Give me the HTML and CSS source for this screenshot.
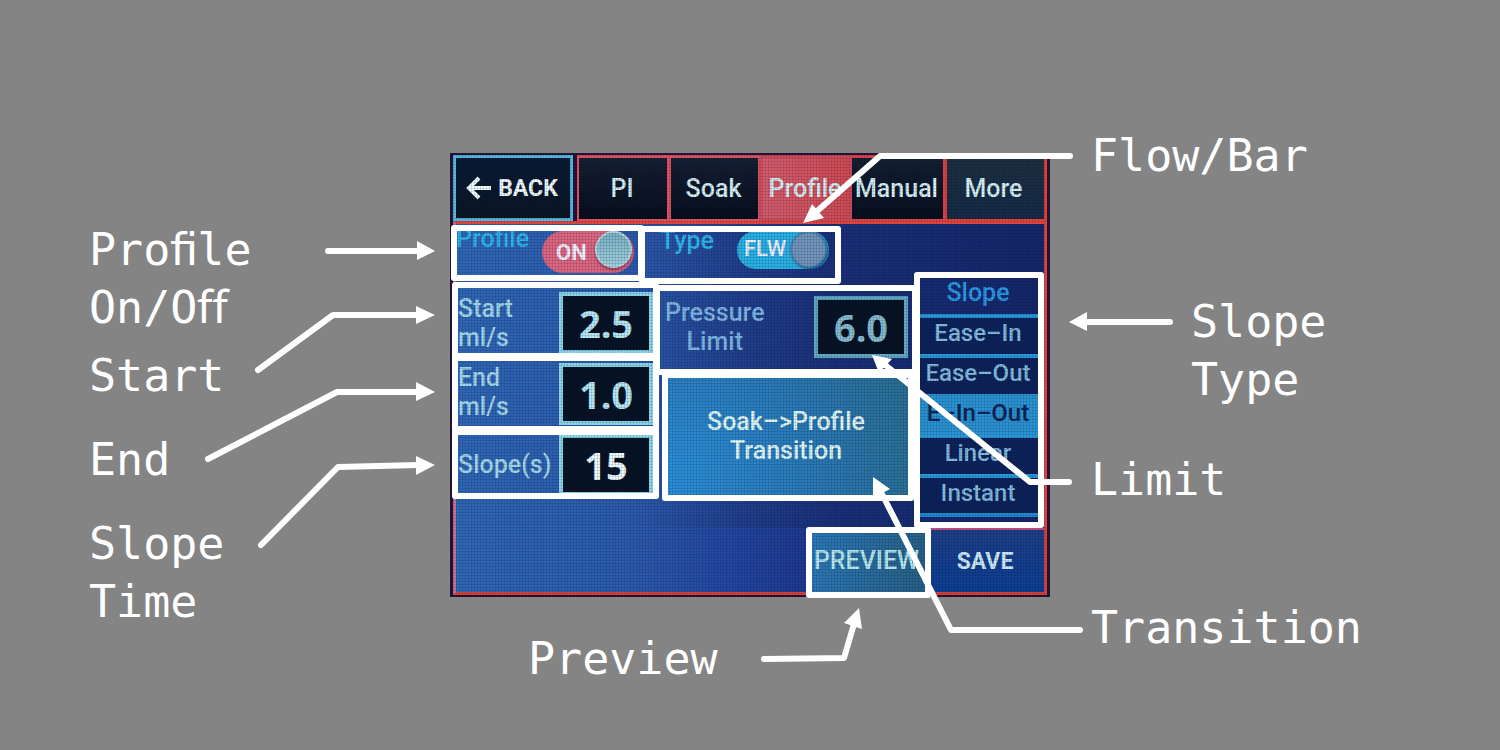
FILE: index.html
```
<!DOCTYPE html>
<html lang="en">
<head>
<meta charset="utf-8">
<title>Profile settings guide</title>
<link rel="stylesheet" href="styles.css">
</head>
<body>
<main class="stage">
  <div class="guide">
    <div class="notes notes-left">
      <p class="note">Pro&#xFB01;le<br>On/O&#xFB00;</p>
      <p class="note note-start">Start</p>
      <p class="note note-end">End</p>
      <p class="note note-time">Slope<br>Time</p>
    </div>

    <section class="device" aria-label="Profile screen">
      <nav class="tabs">
        <button class="tab tab-back" type="button"><svg class="arrow" viewBox="0 0 26 24" aria-hidden="true"><path d="M25 12H3M13 2L3 12l10 10"/></svg>BACK</button>
        <button class="tab" type="button">PI</button>
        <button class="tab" type="button">Soak</button>
        <button class="tab tab-active" type="button">Profile</button>
        <button class="tab tab-tight" type="button">Manual</button>
        <button class="tab tab-more" type="button">More</button>
      </nav>
      <div class="body">
        <div class="settings">
          <div class="switches">
            <label class="switch-label" for="profile-on">Profile</label>
            <span class="switch switch-red"><input class="switch-input" id="profile-on" type="checkbox" checked><span class="switch-text">ON</span><span class="knob"></span></span>
            <label class="switch-label type-label" for="flow-type">Type</label>
            <span class="switch switch-cyan"><input class="switch-input" id="flow-type" type="checkbox" checked><span class="switch-text">FLW</span><span class="knob knob-dim"></span></span>
          </div>
          <div class="params">
            <div class="column">
              <div class="field"><label for="start">Start<br>ml/s</label><input class="value" id="start" value="2.5"></div>
              <div class="field"><label class="end-label" for="end">End<br>ml/s</label><input class="value" id="end" value="1.0"></div>
              <div class="field"><label for="slope">Slope(s)</label><input class="value value-bright" id="slope" value="15"></div>
            </div>
            <div class="column">
              <div class="field field-limit"><label class="limit-label" for="limit">Pressure<br>Limit</label><input class="value value-dim" id="limit" value="6.0"></div>
              <button class="transition" type="button">Soak–&gt;Profile<br>Transition</button>
            </div>
          </div>
        </div>
        <div class="slopes">
          <h2 class="slopes-title">Slope</h2>
          <button class="slope" type="button">Ease–In</button>
          <button class="slope" type="button">Ease–Out</button>
          <button class="slope slope-active" type="button">E–In–Out</button>
          <button class="slope" type="button">Linear</button>
          <button class="slope slope-last" type="button">Instant</button>
        </div>
      </div>
      <div class="actions">
        <button class="action action-preview" type="button">PREVIEW</button>
        <button class="action action-save" type="button">SAVE</button>
      </div>
    </section>

    <div class="notes notes-right">
      <p class="note">Flow/Bar</p>
      <p class="note note-type">Slope<br>Type</p>
      <p class="note note-limit">Limit</p>
      <p class="note note-transition">Transition</p>
    </div>
    <p class="note note-preview">Preview</p>

    <svg class="marks" width="1500" height="750" viewBox="0 0 1500 750" aria-hidden="true">
      <g class="line">
        <rect x="454" y="228" width="187" height="50"/>
        <rect x="642" y="229" width="196" height="52"/>
        <rect x="455" y="285" width="201" height="71"/>
        <rect x="455" y="358" width="201" height="71"/>
        <rect x="455" y="432" width="201" height="64"/>
        <rect x="657" y="288" width="258" height="84"/>
        <rect x="665" y="375" width="246" height="123"/>
        <rect x="917" y="275" width="124" height="250"/>
        <rect x="809" y="530" width="119" height="65"/>
        <path d="M328 251H418M258 370L333 315H418M208 459L337 392H418M261 545L338 467L418 465"/>
        <path d="M1070 156H880L816 212M1170 322H1086M1069 482H1030L884 364M1080 630H951L882 494M764 659L844 658L854 624"/>
      </g>
      <g class="head">
        <path d="M417 241L435 251L417 260ZM416 306L435 315L416 324ZM416 382L435 392L416 401ZM416 456L435 465L416 475Z"/>
        <path d="M803 223L812 204L824 218ZM1069 322L1087 312V331ZM872 355L892 359L879 373ZM873 477L890 489L873 498ZM859 608L844 623L862 629Z"/>
      </g>
    </svg>
  </div>
</main>
</body>
</html>
```
FILE: styles.css
```
* { box-sizing: border-box; }

body {
  margin: 0;
  background: #848484;
  color: #fff;
  font-family: Roboto, "Liberation Sans", sans-serif;
}

button, input { font: inherit; color: inherit; }
button { cursor: pointer; }

.stage {
  min-height: 100vh;
  display: grid;
  place-items: start center;
  overflow: hidden;
}

.guide {
  position: relative;
  display: grid;
  grid-template-columns: 361px 600px 361px;
  grid-template-rows: 444px auto;
  padding: 153px 0 56px;
}

.marks {
  position: absolute;
  top: 0;
  left: 50%;
  margin-left: -750px;
  pointer-events: none;
}
.line {
  fill: none;
  stroke: #fff;
  stroke-width: 6;
  stroke-linecap: round;
  stroke-linejoin: round;
}
.head { fill: #fff; }

.note {
  margin: 0;
  font: 45px/58px "DejaVu Sans Mono", monospace;
}
.notes-left { padding-top: 68px; }
.note-start { margin-top: 10px; }
.note-end { margin-top: 26px; }
.note-time { margin-top: 26px; }
.notes-right { padding-left: 41px; margin-top: -26px; }
.note-type { margin: 108px 0 0 100px; }
.note-limit { margin-top: 42px; }
.note-transition { margin-top: 90px; }
.note-preview { grid-column: 2; padding: 33px 0 0 78px; }

.device {
  position: relative;
  display: flex;
  flex-direction: column;
  padding: 2px 3px;
  background: #251334;
  color: #a4d9eb;
  font-size: 25px;
  font-weight: 500;
  line-height: 29px;
}
.device::after {
  content: "";
  position: absolute;
  inset: 0;
  pointer-events: none;
  background:
    repeating-linear-gradient(0deg, rgba(0, 12, 45, 0.13) 0 1px, transparent 1px 3px),
    repeating-linear-gradient(90deg, rgba(0, 12, 45, 0.13) 0 1px, transparent 1px 3px);
}

.tabs {
  display: grid;
  grid-template-columns: 120px 4px 92px 91px 92px 93px 102px;
  height: 66px;
}
.tab {
  padding: 0 2px 0 0;
  border: 3px solid #df5260;
  border-width: 3px 2px 2px;
  background: linear-gradient(#151f31, #070d1b);
  color: #d6f0f5;
}
.tab-back {
  grid-column: 1 / 2;
  display: flex;
  align-items: center;
  justify-content: center;
  gap: 6px;
  border: 3px solid #58b9df;
  background: linear-gradient(#091b34, #0b1522);
  color: #f4ffff;
  font-size: 23px;
  font-weight: 700;
}
.tab-back + .tab { grid-column: 3; }
.arrow {
  width: 26px;
  height: 24px;
  fill: none;
  stroke: currentColor;
  stroke-width: 4;
}
.tab-active {
  border-color: #cc4b5a;
  background: linear-gradient(90deg, #d65c6b, #d04a52);
}
.tab-tight { border-color: #df4149; border-left-width: 0; }
.tab-more {
  padding-right: 4px;
  border-color: #e34138;
  border-right-width: 3px;
  background: linear-gradient(#1d3040, #152a45);
}

.body {
  flex: 1;
  display: flex;
  border: 3px solid #e2463f;
  border-bottom: 0;
  border-left-color: #c9709a;
  background: linear-gradient(90deg, #2f67b5 0%, #2c5aab 30%, #213f8c 48%, #1a2f77 65%, #142668 100%);
}
.settings { flex: 1; }
.switches {
  display: flex;
  align-items: flex-start;
  height: 63px;
  padding-top: 7px;
  color: #2fb7ec;
}
.switch-label { width: 86px; margin-top: -7px; }
.type-label { width: 77px; margin: -5px 0 0 26px; }
.switch {
  position: relative;
  display: flex;
  align-items: center;
  width: 92px;
  height: 42px;
  padding-left: 14px;
  border-radius: 21px;
  color: #f5f2ff;
  font-size: 22px;
  font-weight: 700;
}
.switch-red { background: #de6780; }
.switch-cyan { height: 38px; padding: 0 0 3px 7px; background: #2bb1e4; font-weight: 500; }
.switch-input {
  position: absolute;
  inset: 0;
  width: 100%;
  height: 100%;
  margin: 0;
  opacity: 0;
}
.knob {
  position: absolute;
  top: 0;
  right: 2px;
  width: 37px;
  height: 37px;
  border: 2px solid #b3d9e4;
  border-radius: 50%;
  background: linear-gradient(#79b1c2, #9ed1dd);
  box-shadow: 0 2px 3px #913d59;
}
.knob-dim {
  border-color: #4d85ad;
  background: #7295ba;
  box-shadow: 1px 1px 2px #174a7b;
}

.params { display: grid; grid-template-columns: 206px 1fr; }
.column { display: flex; flex-direction: column; }
.field {
  display: flex;
  align-items: center;
  justify-content: space-between;
  height: 71px;
  padding: 0 9px 0 2px;
}
.end-label { padding-bottom: 4px; }
.value {
  width: 94px;
  height: 62px;
  padding: 0;
  border: 4px solid #8bd7ea;
  border-radius: 0;
  background: #071222;
  color: #b7e7f1;
  font: 700 38px/50px "Noto Sans", sans-serif;
  text-align: center;
}
.value-bright { color: #effcff; }
.value-dim { border-color: #62aac4; color: #86bccd; }
.field-limit { height: 88px; padding: 0 10px 8px 3px; color: #80b7e2; }
.limit-label { text-align: center; }
.transition {
  height: 126px;
  margin: 0 2px 0 4px;
  padding: 0 10px 4px 0;
  border: 0;
  background: radial-gradient(circle at 0 80%, #2b90da, #2a79b5 55%, #2a6e8e);
  color: #e2f9f8;
  line-height: 29px;
}

.slopes {
  display: flex;
  flex-direction: column;
  width: 126px;
  padding: 54px 6px 0 0;
  color: #84bcdd;
}
.slopes-title {
  margin: 0;
  height: 36px;
  color: #2a99e6;
  font: inherit;
  line-height: 30px;
  text-align: center;
}
.slope {
  height: 40px;
  padding: 0 0 5px;
  border: 0;
  border-top: 4px solid #2a99da;
  background: #0c2259;
  font-size: 24px;
}
.slope-active { border-color: #2b93d2; background: #2b93d2; color: #0b2455; }
.slope-last { height: 43px; border-bottom: 4px solid #218bd0; }

.actions {
  display: flex;
  justify-content: flex-end;
  height: 67px;
  border: 3px solid #dc4238;
  border-top: 0;
  border-left-color: #c9709a;
  background: linear-gradient(90deg, #2f67b5 0%, #2c5aab 30%, #2244a0 48%, #1c3484 65%, #183b91 100%);
}
.action {
  padding: 0;
  border: 0;
  background: transparent;
}
.action-preview { width: 119px; background: linear-gradient(100deg, #2b7abb, #285f82); color: #b8e8ed; }
.action-save {
  width: 118px;
  border-top: 2px solid #c05083;
  background: linear-gradient(#1e3f86, #0c3e94);
  color: #cdebf8;
  font-size: 23px;
  font-weight: 700;
}
```
